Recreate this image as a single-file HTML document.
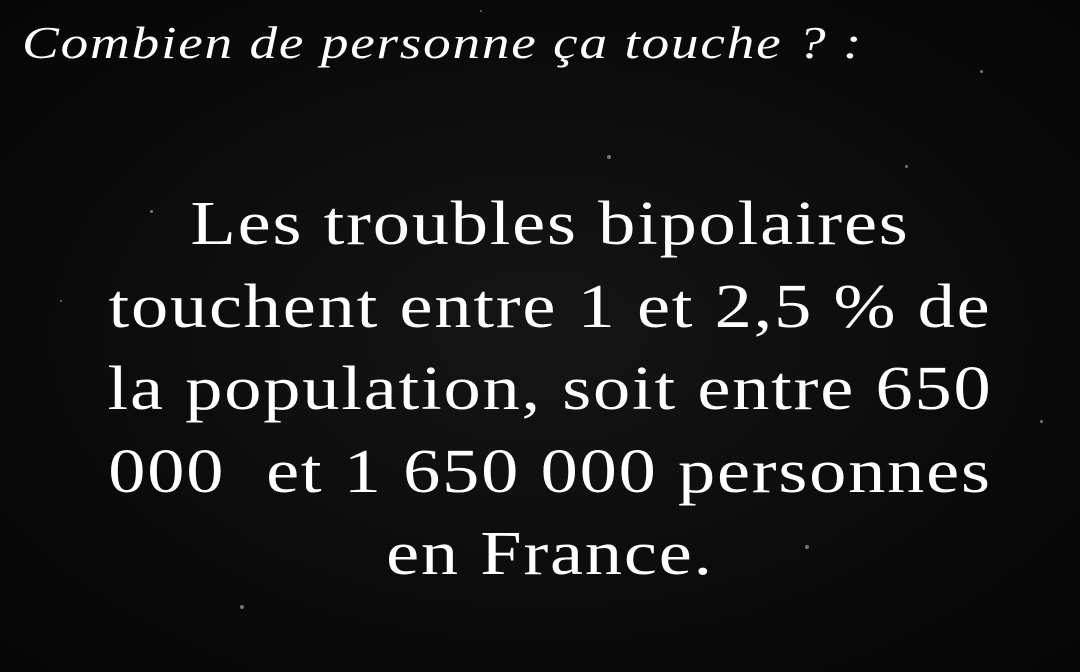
<!DOCTYPE html>
<html><head><meta charset="utf-8"><style>
html,body{margin:0;padding:0}
body{width:1080px;height:672px;overflow:hidden;background:#0a0a0a;position:relative;font-family:"Liberation Serif",serif;color:#fff}
.bg{position:absolute;inset:0;background:radial-gradient(ellipse at 50% 50%,#151515 0%,#0b0b0b 60%,#060606 100%)}
.s{position:absolute;border-radius:50%;background:#bbb;opacity:.6}
.t{position:absolute;left:22px;top:16px;font-style:italic;font-size:46px;letter-spacing:1.5px;white-space:nowrap;transform:scaleX(1.2);transform-origin:0 0}
.m{position:absolute;left:0;width:1100px;top:183px;text-align:center;font-size:62px;line-height:82.5px;letter-spacing:1.5px;transform:scaleX(1.2);transform-origin:550px 0}
</style></head><body>
<div class="bg"></div>
<div class="s" style="left:607px;top:155px;width:4px;height:4px"></div>
<div class="s" style="left:150px;top:210px;width:3px;height:3px"></div>
<div class="s" style="left:905px;top:165px;width:3px;height:3px"></div>
<div class="s" style="left:240px;top:605px;width:4px;height:4px"></div>
<div class="s" style="left:805px;top:545px;width:4px;height:4px"></div>
<div class="s" style="left:980px;top:70px;width:3px;height:3px"></div>
<div class="s" style="left:60px;top:300px;width:2px;height:2px"></div>
<div class="s" style="left:1040px;top:420px;width:3px;height:3px"></div>
<div class="s" style="left:480px;top:10px;width:2px;height:2px"></div>
<div class="t">Combien de personne ça touche ? :</div>
<div class="m">Les troubles bipolaires<br>touchent entre 1 et 2,5 % de<br>la population, soit entre 650<br>000&nbsp; et 1 650 000 personnes<br>en France.</div>
</body></html>
